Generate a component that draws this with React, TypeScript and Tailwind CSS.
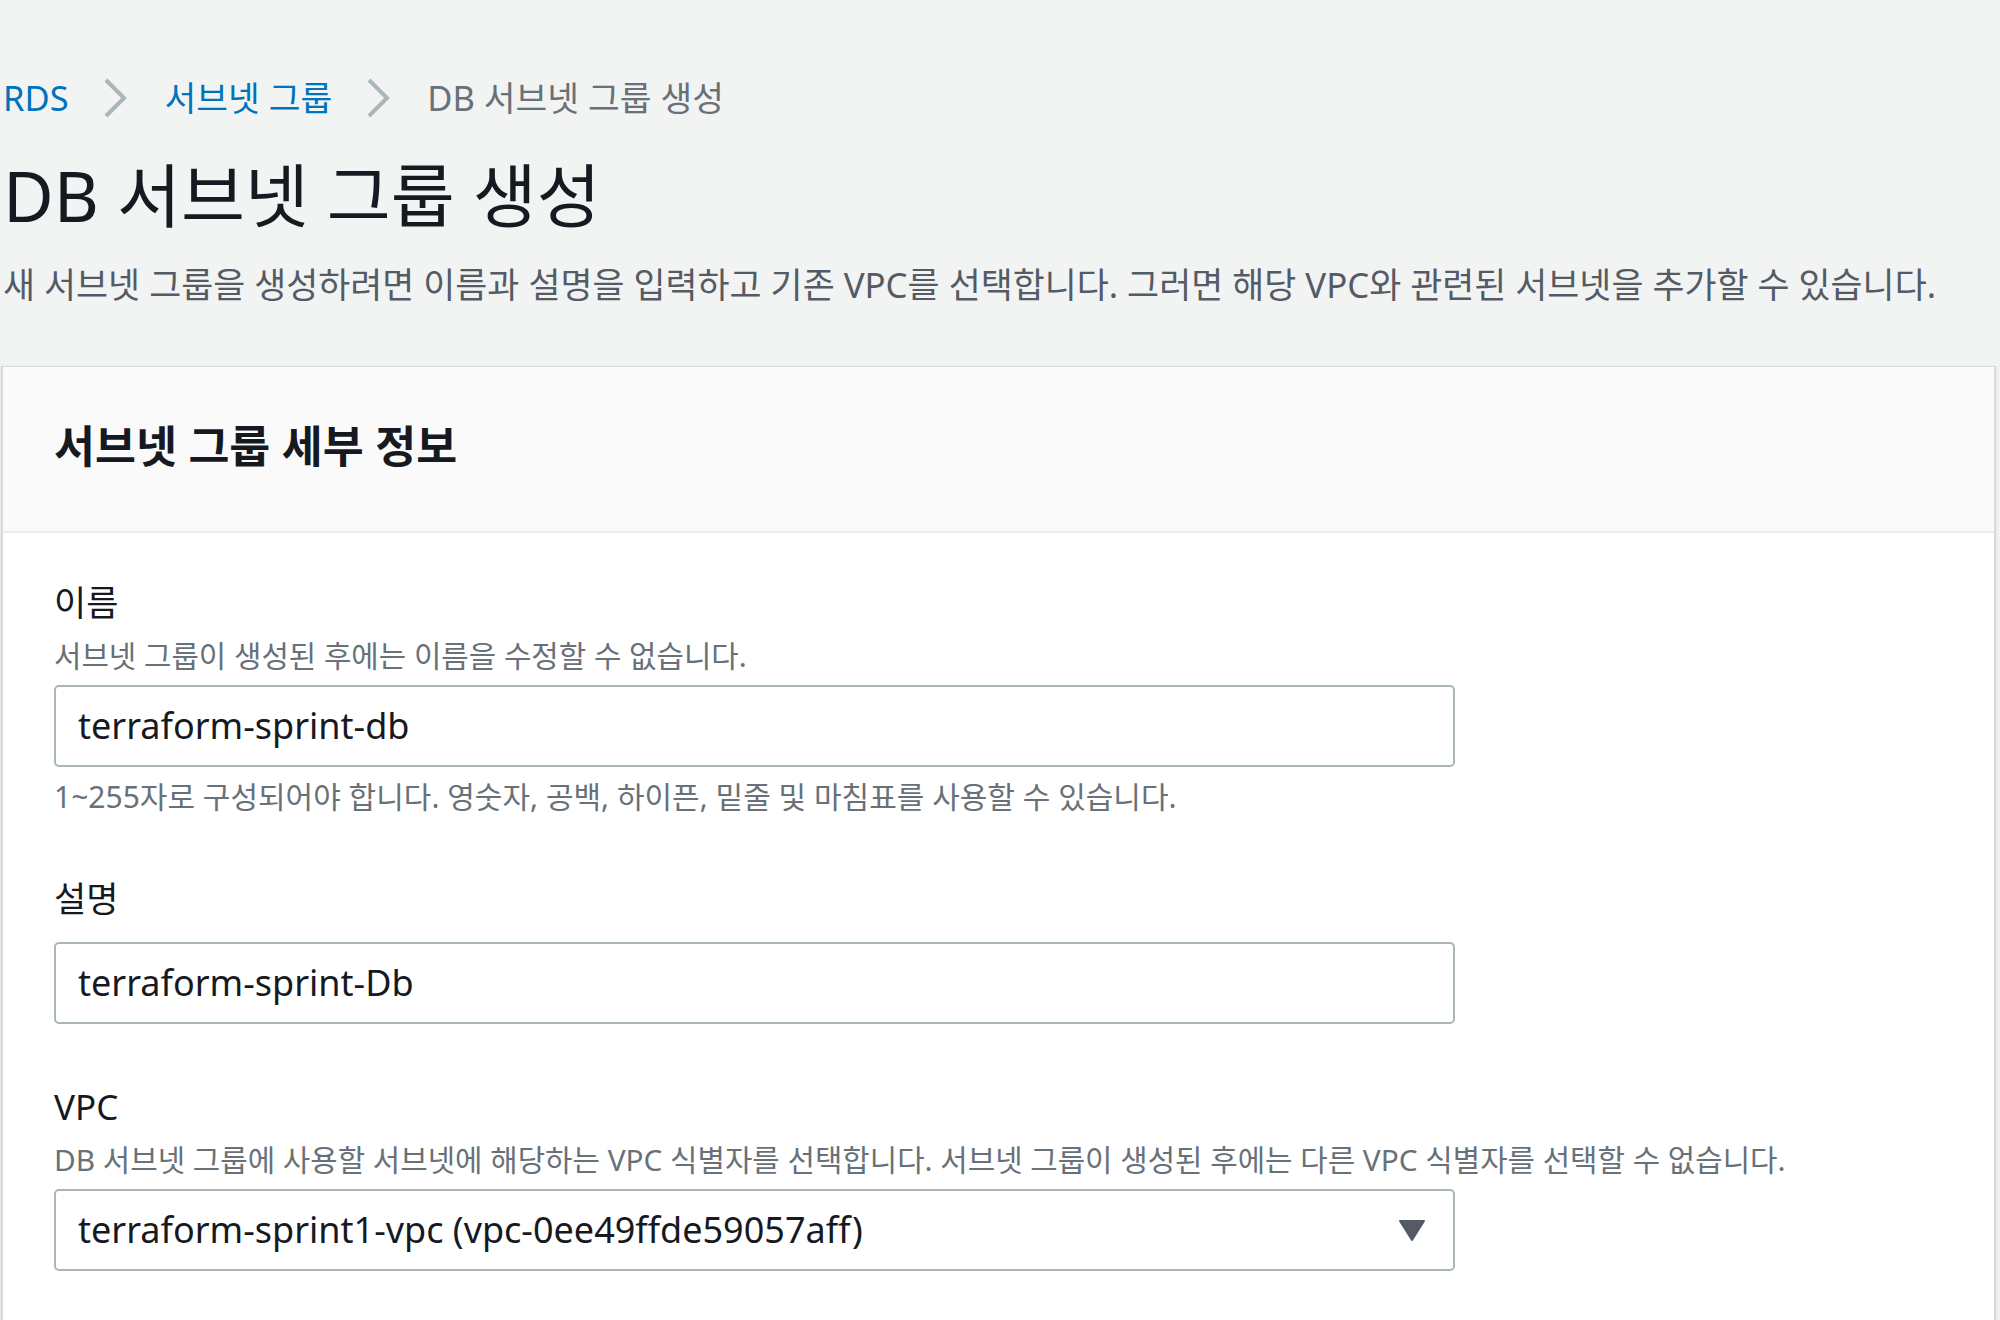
import React from "react";

const Chevron = () => (
  <svg width="24" height="40" viewBox="0 0 24 40" className="shrink-0">
    <polyline points="3,2 21,20 3,38" fill="none" stroke="#aab7b8" strokeWidth="4" />
  </svg>
);

function Field({
  label,
  hint,
  value,
  after,
  select,
  className = "",
}: {
  label: string;
  hint?: string;
  value: string;
  after?: string;
  select?: boolean;
  className?: string;
}) {
  return (
    <div className={className}>
      <div className="text-[35px] leading-[40px] text-[#16191f]">{label}</div>
      {hint && (
        <div className="mt-[15px] text-[29.8px] leading-[36px] text-[#687078]">{hint}</div>
      )}
      <div
        className={`${hint ? "mt-[11px]" : "mt-[23px]"} flex items-center w-[1401px] h-[82px] border-2 border-[#aab7b8] rounded-[5px] bg-white pl-[22px] pr-[28px]`}
      >
        <span className="flex-1 text-[36px] text-[#16191f]">{value}</span>
        {select && (
          <svg width="26" height="22" viewBox="0 0 26 22">
            <polygon points="1,2 25,2 13,21" fill="#545b64" strokeLinejoin="round" stroke="#545b64" strokeWidth="2" />
          </svg>
        )}
      </div>
      {after && (
        <div className="mt-[12px] text-[30px] leading-[36px] text-[#687078]">{after}</div>
      )}
    </div>
  );
}

export default function App() {
  return (
    <div className="w-[2000px] h-[1320px] overflow-hidden bg-[#f2f3f3] font-['Noto_Sans','Noto_Sans_CJK_KR',sans-serif]">
      <div className="pl-[3px] pt-[78px]">
        <nav className="flex items-center h-[40px] text-[34.5px] leading-[40px]">
          <span className="text-[#0073bb]">RDS</span>
          <span className="ml-[34px] mr-[38px] flex">
            <Chevron />
          </span>
          <span className="text-[#0073bb]">서브넷 그룹</span>
          <span className="ml-[34px] mr-[37px] flex">
            <Chevron />
          </span>
          <span className="text-[#687078]">DB 서브넷 그룹 생성</span>
        </nav>
        <h1 className="mt-[37px] text-[69.5px] leading-[80px] text-[#16191f]">DB 서브넷 그룹 생성</h1>
        <p className="mt-[30px] text-[34.8px] leading-[40px] text-[#545b64]">
          새 서브넷 그룹을 생성하려면 이름과 설명을 입력하고 기존 VPC를 선택합니다. 그러면 해당 VPC와 관련된 서브넷을 추가할 수 있습니다.
        </p>
      </div>

      <section className="mt-[61px] ml-px w-[1995px] h-[1000px] bg-white border-x-2 border-t border-[#d5dbdb] shadow-sm">
        <div className="h-[166px] flex items-center px-[51px] pb-[6px] bg-[#fafafa] border-b-2 border-[#eaeded]">
          <h2 className="text-[44.5px] font-bold text-[#16191f]">서브넷 그룹 세부 정보</h2>
        </div>
        <div className="px-[51px] pt-[50px]">
          <Field
            label="이름"
            hint="서브넷 그룹이 생성된 후에는 이름을 수정할 수 없습니다."
            value="terraform-sprint-db"
            after="1~255자로 구성되어야 합니다. 영숫자, 공백, 하이픈, 밑줄 및 마침표를 사용할 수 있습니다."
          />
          <Field className="mt-[64px]" label="설명" value="terraform-sprint-Db" />
          <Field
            className="mt-[63px]"
            label="VPC"
            hint="DB 서브넷 그룹에 사용할 서브넷에 해당하는 VPC 식별자를 선택합니다. 서브넷 그룹이 생성된 후에는 다른 VPC 식별자를 선택할 수 없습니다."
            value="terraform-sprint1-vpc (vpc-0ee49ffde59057aff)"
            select
          />
        </div>
      </section>
    </div>
  );
}
